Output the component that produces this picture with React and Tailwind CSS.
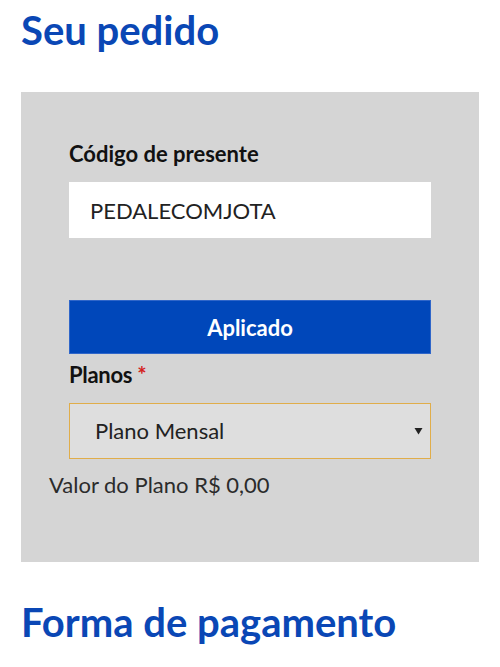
export default function App() {
  return (
    <div className="w-[500px] h-[667px] bg-white overflow-hidden px-[21px]" style={{ fontFamily: "Lato, 'Open Sans', sans-serif" }}>
      <h1 className="pt-[6px] text-[40px] leading-[1.2] font-bold text-[#0a47b5]">Seu pedido</h1>
      <div className="mt-[38px] w-[458px] h-[470px] bg-[#d5d5d5] pt-[49px] px-[28px]">
        <div className="px-[20px]">
          <div className="text-[22px] leading-[1.2] font-bold text-[#111]">Código de presente</div>
          <div className="mt-[15px] h-[56px] bg-white flex items-center px-[21px] text-[22px] text-[#222]">PEDALECOMJOTA</div>
          <button className="mt-[62px] w-full h-[54px] bg-[#0047ba] border border-[#2f66c9] text-white text-[22px] font-bold flex items-center justify-center">Aplicado</button>
          <div className="mt-[8px] text-[22px] leading-[1.2] font-bold text-[#111] tracking-[-0.3px]">
            Planos <span className="text-[#d42020]">*</span>
          </div>
          <div className="mt-[14px] h-[56px] bg-[#dedede] border border-[#e0ad4a] flex items-center justify-between pl-[25px] pr-[7px] text-[22px] text-[#222]">
            <span>Plano Mensal</span>
            <svg width="9" height="8" viewBox="0 0 9 8"><path d="M0.5 1 H8.5 L4.5 7.5 Z" fill="#222" /></svg>
          </div>
        </div>
        <div className="mt-[13px] text-[22px] leading-[1.2] text-[#2b2b2b]">Valor do Plano R$ 0,00</div>
      </div>
      <h2 className="mt-[36px] text-[40px] leading-[1.2] font-bold text-[#0a47b5]">Forma de pagamento</h2>
    </div>
  );
}
